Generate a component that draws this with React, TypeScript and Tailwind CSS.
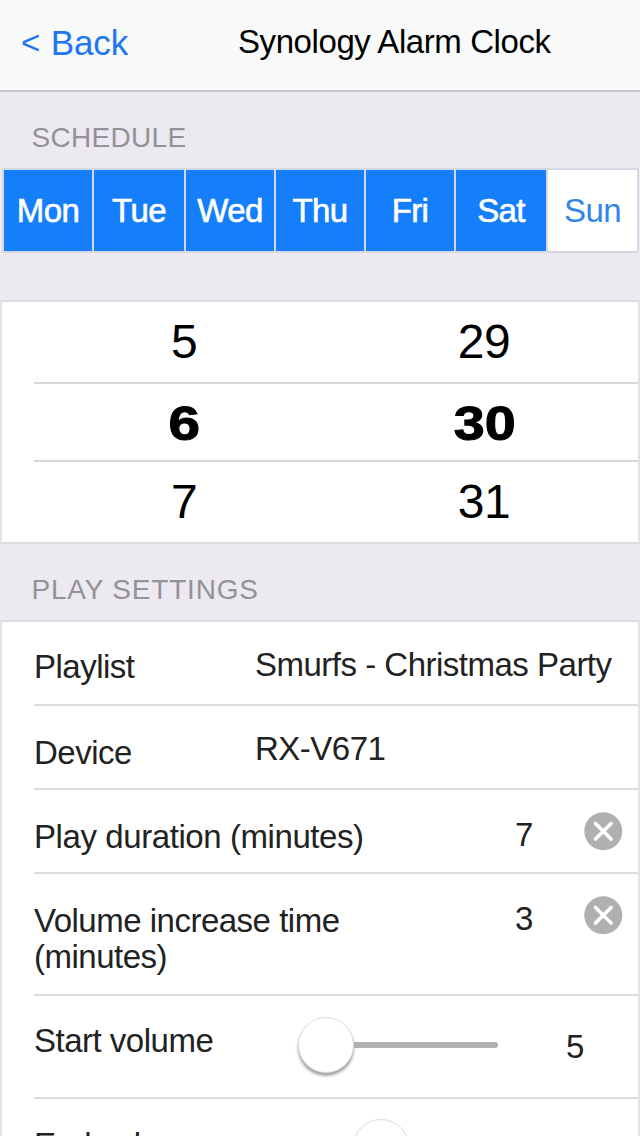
import type { ReactNode } from "react";

const days = [
  { name: "Mon", active: true, width: "w-[90px]" },
  { name: "Tue", active: true, width: "w-[92px]" },
  { name: "Wed", active: true, width: "w-[90px]" },
  { name: "Thu", active: true, width: "w-[90px]" },
  { name: "Fri", active: true, width: "w-[90px]" },
  { name: "Sat", active: true, width: "w-[92px]" },
  { name: "Sun", active: false, width: "w-[91px]" },
];

function SectionTitle({ children, className }: { children: ReactNode; className: string }) {
  return (
    <h2 className={`pl-[31.5px] text-[28px] leading-8 text-[#939297] ${className}`}>{children}</h2>
  );
}

function PickerRow({ hour, minute, className }: { hour: string; minute: string; className: string }) {
  return (
    <div className={`ml-8 flex text-5xl leading-[54px] tracking-[-0.5px] text-black ${className}`}>
      <span className="w-[300px] text-center">{hour}</span>
      <span className="w-[300px] text-center">{minute}</span>
    </div>
  );
}

function SettingRow({ label, children, className }: { label: ReactNode; children?: ReactNode; className: string }) {
  return (
    <div className={`ml-8 flex items-start ${className}`}>
      <span className="shrink-0">{label}</span>
      {children}
    </div>
  );
}

function ClearButton() {
  return (
    <button className="mr-[15px] mt-[21px]" aria-label="Clear">
      <svg width="40" height="40" viewBox="0 0 40 40" className="block">
        <circle cx="20.3" cy="20.2" r="19" fill="#b0b0b0" />
        <path d="M12.5 12.4 28.1 28M28.1 12.4 12.5 28" stroke="#fff" strokeWidth="3.6" strokeLinecap="round" />
      </svg>
    </button>
  );
}

function Knob() {
  return (
    <span className="block size-14 rounded-full border-[1.5px] border-[#dcdcdc] bg-white shadow-[0_3px_3px_rgba(0,0,0,0.38)]" />
  );
}

export default function App() {
  return (
    <div className="h-[1136px] w-[640px] overflow-hidden bg-[#ece9f0] font-['Liberation_Sans',Arial,sans-serif]">
      <header className="flex h-[91.5px] items-start border-b-2 border-[#c6c6c9] bg-[#f8faf9]">
        <button className="ml-[21px] mt-[23px] flex w-[217px] items-start gap-[10.5px] text-left text-[35px] leading-10 tracking-[-0.1px] text-[#2175f3]">
          <span className="text-[33px] leading-[39px]">&lt;</span>
          <span>Back</span>
        </button>
        <h1 className="mt-[24px] text-[33px] leading-9 tracking-[-0.42px] text-black">Synology Alarm Clock</h1>
      </header>

      <SectionTitle className="mt-[30.5px] h-[46px] tracking-[0.3px]">SCHEDULE</SectionTitle>

      <div className="ml-[2px] flex h-[85px] w-[637px] border-y-2 border-l-2 border-[#d5d9e4]">
        {days.map((day) => (
          <button
            key={day.name}
            className={`h-full border-r-2 border-[#d5d9e4] pt-px text-[33px] tracking-[-0.6px] ${day.width} ${
              day.active ? "bg-[#157efb] text-white [-webkit-text-stroke:0.6px]" : "bg-white text-[#3184ea]"
            }`}
          >
            {day.name}
          </button>
        ))}
      </div>

      <section className="mt-[47px] h-[244px] border-2 border-[#dcdbe1] border-x-[#e2e1e6] bg-white">
        <PickerRow hour="5" minute="29" className="h-20 pt-[13px]" />
        <div className="ml-8 flex h-20 border-y-2 border-[#d8d8dc] pt-[13px] text-5xl leading-[54px] font-bold text-black [-webkit-text-stroke:1px]">
          <span className="w-[300px] text-center">
            <span className="inline-block scale-x-[1.18]">6</span>
          </span>
          <span className="w-[301px] text-center">
            <span className="inline-block scale-x-[1.16]">30</span>
          </span>
        </div>
        <PickerRow hour="7" minute="31" className="h-20 pt-[13px]" />
      </section>

      <SectionTitle className="h-[76px] pt-[30px] tracking-[0.8px]">PLAY SETTINGS</SectionTitle>

      <section className="h-[600px] border-2 border-[#dcdbe1] border-x-[#e2e1e6] bg-white text-[33px] leading-9 tracking-[-0.5px] text-[#222]">
        <SettingRow className="h-[84px] border-b-2 border-[#dcdbe1]" label={<span className="block w-[221px] pt-[27px]">Playlist</span>}>
          <span className="pt-[25px]">Smurfs - Christmas Party</span>
        </SettingRow>
        <SettingRow className="h-[84px] border-b-2 border-[#dcdbe1]" label={<span className="block w-[221px] pt-[29px]">Device</span>}>
          <span className="pt-[25px]">RX-V671</span>
        </SettingRow>
        <SettingRow
          className="h-[84px] border-b-2 border-[#dcdbe1]"
          label={<span className="block w-[481px] pt-[29px] tracking-[-0.42px]">Play duration (minutes)</span>}
        >
          <span className="flex-1 pt-[27px]">7</span>
          <ClearButton />
        </SettingRow>
        <SettingRow
          className="h-[122px] border-b-2 border-[#dcdbe1]"
          label={<span className="block w-[481px] pr-[150px] pt-[29px]">Volume increase time (minutes)</span>}
        >
          <span className="flex-1 pt-[27px]">3</span>
          <ClearButton />
        </SettingRow>
        <SettingRow className="h-[103px] border-b-2 border-[#dcdbe1]" label={<span className="block w-[264px] pt-[27px]">Start volume</span>}>
          <span className="flex w-[268px] items-center pt-[21px]">
            <Knob />
            <span className="h-[6px] w-36 rounded-r-sm bg-[#b0b0b0]" />
          </span>
          <span className="pt-[33px]">5</span>
        </SettingRow>
        <SettingRow className="h-[102px]" label={<span className="block w-[264px] pt-[28px]">End volume</span>}>
          <span className="flex items-center pt-5">
            <span className="h-[6px] w-[55px] rounded-l-sm bg-[#b0b0b0]" />
            <Knob />
            <span className="h-[6px] w-[89px] rounded-r-sm bg-[#b0b0b0]" />
          </span>
        </SettingRow>
      </section>
    </div>
  );
}
